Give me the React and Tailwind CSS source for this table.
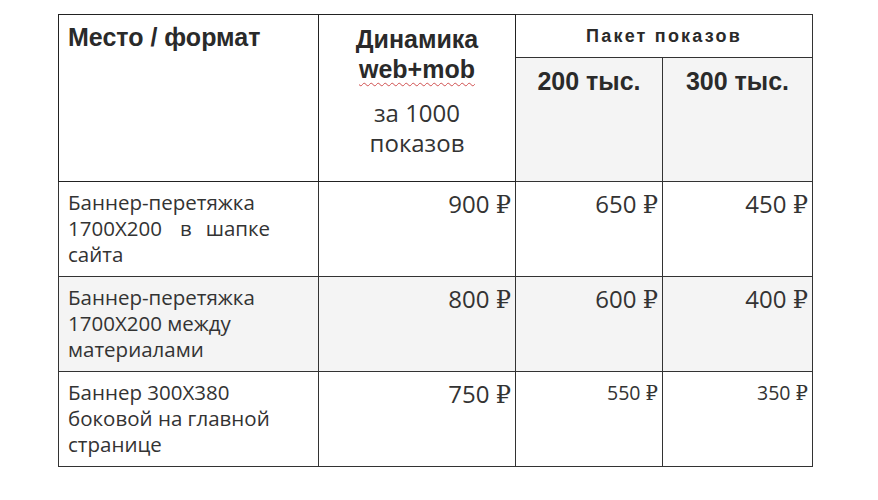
export default function App() {
  const rows = [
    {
      name: [
        "Баннер-перетяжка",
        <>
          1700Х200<span className="ml-[18px]">в</span>
          <span className="ml-[14px]">шапке</span>
        </>,
        "сайта",
      ],
      p: ["900", "650", "450"],
      grey: false,
      small: false,
    },
    { name: ["Баннер-перетяжка", "1700Х200 между", "материалами"], p: ["800", "600", "400"], grey: true, small: false },
    { name: ["Баннер 300Х380", "боковой на главной", "странице"], p: ["750", "550", "350"], grey: false, small: true },
  ];
  const sans = "font-['Liberation_Sans',Arial,sans-serif]";
  const os = "font-['Open_Sans',sans-serif]";

  return (
    <div className="w-[878px] h-[500px] bg-white pt-[14px] pl-[58px]">
      <table className="border-collapse text-[#333] table-fixed w-[754px]">
        <colgroup>
          <col className="w-[260px]" />
          <col className="w-[197px]" />
          <col className="w-[147px]" />
          <col className="w-[150px]" />
        </colgroup>
        <thead>
          <tr className="h-[43px]">
            <th rowSpan={2} className={`border border-[#222] align-top text-left font-bold text-[25px] leading-[30px] text-[#2a2a2a] pl-[9px] pt-[7px] ${sans}`}>
              Место / формат
            </th>
            <th rowSpan={2} className="border border-[#222] align-top text-center pt-[9px]">
              <div className={`font-bold text-[25px] leading-[30px] text-[#2a2a2a] ${sans}`}>Динамика</div>
              <div className={`font-bold text-[25px] leading-[30px] text-[#2a2a2a] ${sans}`}>
                <span className="underline decoration-wavy decoration-[#d05050] decoration-1 underline-offset-[4px]">web+mob</span>
              </div>
              <div className={`font-normal text-[24px] leading-[30px] mt-[14px] ${os}`}>
                за 1000<br />показов
              </div>
            </th>
            <th colSpan={2} className={`border border-[#333] text-center font-bold text-[18px] tracking-[2.2px] text-[#2a2a2a] ${sans}`}>
              Пакет показов
            </th>
          </tr>
          <tr className="h-[124px]">
            <th className={`border border-[#333] bg-[#f4f4f4] align-top text-center font-bold text-[25px] leading-[30px] text-[#2a2a2a] pt-[8px] ${sans}`}>
              200 тыс.
            </th>
            <th className={`border border-[#333] bg-[#f4f4f4] align-top text-center font-bold text-[25px] leading-[30px] text-[#2a2a2a] pt-[8px] ${sans}`}>
              300 тыс.
            </th>
          </tr>
        </thead>
        <tbody>
          {rows.map((r, i) => (
            <tr key={i} className={`h-[95px] ${r.grey ? "bg-[#f4f4f4]" : ""}`}>
              <td className={`border border-[#333] align-top pl-[9px] pt-[7px] text-[20.5px] leading-[26px] ${os}`}>
                {r.name.map((l, j) => (
                  <div key={j} className="whitespace-pre">{l}</div>
                ))}
              </td>
              {r.p.map((p, j) => (
                <td
                  key={j}
                  className={`border border-[#333] align-top text-right pr-[4px] ${os} ${
                    r.small && j > 0 ? "text-[19.5px] leading-[24px] pt-[9px]" : "text-[24px] leading-[28px] pt-[8px]"
                  }`}
                >
                  {p}{" "}
                  <span className="font-['DejaVu_Serif',serif]">₽</span>
                </td>
              ))}
            </tr>
          ))}
        </tbody>
      </table>
    </div>
  );
}
